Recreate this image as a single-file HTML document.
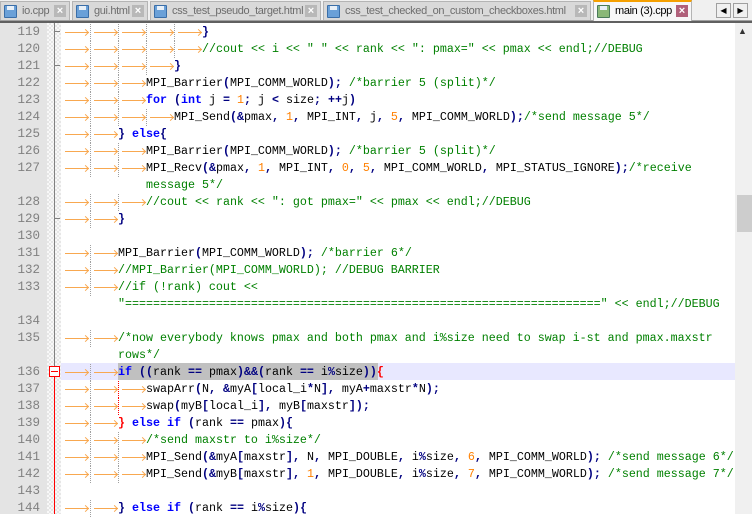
<!DOCTYPE html>
<html><head><meta charset="utf-8"><style>
*{margin:0;padding:0;box-sizing:border-box}
body{width:752px;height:514px;overflow:hidden;background:#fff;position:relative;font-family:"Liberation Sans",sans-serif}
.tabbar{position:absolute;left:0;top:0;width:752px;height:21px;background:#f0f0f0;border-bottom:1px solid #a0a0a0}
.tab{position:absolute;top:1px;height:19px;background:#d9d9d9;border:1px solid #b4b4b4;border-bottom:none;font-size:11px;letter-spacing:-0.35px;color:#6d6d6d;line-height:18px;padding-left:21px;white-space:nowrap;overflow:hidden}
.tab.act{background:#f7f7f7;color:#000;border-top:2px solid #f5a000;top:0;height:21px;line-height:18px}
.ic{position:absolute;left:3px;top:3px;width:13px;height:13px;background:#6aa0d8;border:1px solid #3a6ea8;border-radius:1px}
.ic:after{content:"";position:absolute;left:2px;top:0;width:7px;height:4px;background:#e8f0f8}
.x{position:absolute;right:3px;top:3px;width:12px;height:12px;background:#b8b8b8;color:#fff;font-size:11px;line-height:12px;text-align:center;font-weight:bold;letter-spacing:0}
.act .x{background:#b0607a}
.arr{position:absolute;top:3px;width:15px;height:15px;border:1px solid #a0a0a0;background:#f0f0f0;font-size:8px;line-height:13px;text-align:center}
.sep{position:absolute;top:21px;left:0;width:752px;height:2px;background:#606060}
.ln{position:absolute;left:0;top:23px;width:47px;height:491px;background:#e4e4e4}
.fm{position:absolute;left:47px;top:23px;width:14px;height:491px;background-color:#f8f8f8;background-image:linear-gradient(45deg,#e6e6e6 25%,transparent 25%,transparent 75%,#e6e6e6 75%),linear-gradient(45deg,#e6e6e6 25%,transparent 25%,transparent 75%,#e6e6e6 75%);background-size:4px 4px;background-position:0 0,2px 2px}
.sb{position:absolute;left:735px;top:23px;width:17px;height:491px;background:#f0f0f0}
.thumb{position:absolute;left:737px;top:195px;width:15px;height:37px;background:#cdcdcd}
.row{position:absolute;left:0;height:17px;width:735px;font-family:"Liberation Mono",monospace;font-size:11.67px;line-height:17px;white-space:pre;color:#000}
.num{position:absolute;left:0;top:1px;width:40px;text-align:right;color:#808080;font-family:"Liberation Mono",monospace;font-size:12.5px}
.code{position:absolute;left:62px;top:1px}
.t{display:inline-block;width:28px;height:17px;position:relative;vertical-align:top}
.t:before{content:"";position:absolute;left:3px;top:8px;width:24px;height:1px;background:#f8a850}
.t:after{content:"";position:absolute;left:21px;top:6px;width:4px;height:4px;border-right:1px solid #f8a850;border-top:1px solid #f8a850;transform:rotate(45deg)}
.g{border-left:1px dotted #a0a0a0}
.k{color:#0000ff;font-weight:bold}
.o{color:#000080;font-weight:bold}
.n{color:#ff8000}
.c{color:#008000}
.s{color:#808080}
.r{color:#ff0000;font-weight:bold}
</style></head><body>
<div class="tabbar">
<div class="tab" style="left:0;width:70px"><span class="ic"></span>io.cpp<span class="x">×</span></div>
<div class="tab" style="left:72px;width:76px"><span class="ic"></span>gui.html<span class="x">×</span></div>
<div class="tab" style="left:150px;width:171px"><span class="ic"></span>css_test_pseudo_target.html<span class="x">×</span></div>
<div class="tab" style="left:323px;width:268px"><span class="ic"></span>css_test_checked_on_custom_checkboxes.html<span class="x">×</span></div>
<div class="tab act" style="left:593px;width:99px"><span class="ic" style="background:#8ab878;border-color:#4a7a5a"></span>main (3).cpp<span class="x">×</span></div>
<div class="arr" style="left:716px">◀</div><div class="arr" style="left:733px">▶</div>
</div>
<div class="sep"></div>
<div class="ln"></div><div class="fm"></div>
<div style="position:absolute;left:54px;top:23px;width:1px;height:343px;background:#808080"></div>
<div style="position:absolute;left:54px;top:31px;width:6px;height:1px;background:#808080"></div>
<div style="position:absolute;left:54px;top:65px;width:6px;height:1px;background:#808080"></div>
<div style="position:absolute;left:54px;top:218px;width:6px;height:1px;background:#808080"></div>
<div style="position:absolute;left:49px;top:366px;width:11px;height:11px;border:1px solid #f00;background:#fff"></div>
<div style="position:absolute;left:51px;top:371px;width:7px;height:1px;background:#f00"></div>
<div style="position:absolute;left:54px;top:377px;width:1px;height:137px;background:#f00"></div>
<div style="position:absolute;left:61px;top:363px;width:674px;height:17px;background:#e8e8ff"></div>
<div style="position:absolute;left:118px;top:363px;width:260px;height:17px;background:#c0c0c0"></div>
<div class="sb"></div><div class="thumb"></div>
<div style="position:absolute;left:738px;top:26px;font-size:9px;color:#333">▲</div>

<div class="row" style="top:23px"><span class="num">119</span><span class="code"><span class="t"></span><span class="t g"></span><span class="t g"></span><span class="t g"></span><span class="t g"></span><span class="o">}</span></span></div>
<div class="row" style="top:40px"><span class="num">120</span><span class="code"><span class="t"></span><span class="t g"></span><span class="t g"></span><span class="t g"></span><span class="t g"></span><span class="c">//cout &lt;&lt; i &lt;&lt; " " &lt;&lt; rank &lt;&lt; ": pmax=" &lt;&lt; pmax &lt;&lt; endl;//DEBUG</span></span></div>
<div class="row" style="top:57px"><span class="num">121</span><span class="code"><span class="t"></span><span class="t g"></span><span class="t g"></span><span class="t g"></span><span class="o">}</span></span></div>
<div class="row" style="top:74px"><span class="num">122</span><span class="code"><span class="t"></span><span class="t g"></span><span class="t g"></span>MPI_Barrier<span class="o">(</span>MPI_COMM_WORLD<span class="o">);</span> <span class="c">/*barrier 5 (split)*/</span></span></div>
<div class="row" style="top:91px"><span class="num">123</span><span class="code"><span class="t"></span><span class="t g"></span><span class="t g"></span><span class="k">for</span> <span class="o">(</span><span class="k">int</span> j <span class="o">=</span> <span class="n">1</span><span class="o">;</span> j <span class="o">&lt;</span> size<span class="o">;</span> <span class="o">++</span>j<span class="o">)</span></span></div>
<div class="row" style="top:108px"><span class="num">124</span><span class="code"><span class="t"></span><span class="t g"></span><span class="t g"></span><span class="t g"></span>MPI_Send<span class="o">(&amp;</span>pmax<span class="o">,</span> <span class="n">1</span><span class="o">,</span> MPI_INT<span class="o">,</span> j<span class="o">,</span> <span class="n">5</span><span class="o">,</span> MPI_COMM_WORLD<span class="o">);</span><span class="c">/*send message 5*/</span></span></div>
<div class="row" style="top:125px"><span class="num">125</span><span class="code"><span class="t"></span><span class="t g"></span><span class="o">}</span> <span class="k">else</span><span class="o">{</span></span></div>
<div class="row" style="top:142px"><span class="num">126</span><span class="code"><span class="t"></span><span class="t g"></span><span class="t g"></span>MPI_Barrier<span class="o">(</span>MPI_COMM_WORLD<span class="o">);</span> <span class="c">/*barrier 5 (split)*/</span></span></div>
<div class="row" style="top:159px"><span class="num">127</span><span class="code"><span class="t"></span><span class="t g"></span><span class="t g"></span>MPI_Recv<span class="o">(&amp;</span>pmax<span class="o">,</span> <span class="n">1</span><span class="o">,</span> MPI_INT<span class="o">,</span> <span class="n">0</span><span class="o">,</span> <span class="n">5</span><span class="o">,</span> MPI_COMM_WORLD<span class="o">,</span> MPI_STATUS_IGNORE<span class="o">);</span><span class="c">/*receive</span></span></div>
<div class="row" style="top:176px"><span class="code" style="left:146px"><span class="c">message 5*/</span></span></div>
<div class="row" style="top:193px"><span class="num">128</span><span class="code"><span class="t"></span><span class="t g"></span><span class="t g"></span><span class="c">//cout &lt;&lt; rank &lt;&lt; ": got pmax=" &lt;&lt; pmax &lt;&lt; endl;//DEBUG</span></span></div>
<div class="row" style="top:210px"><span class="num">129</span><span class="code"><span class="t"></span><span class="t g"></span><span class="o">}</span></span></div>
<div class="row" style="top:227px"><span class="num">130</span></div>
<div class="row" style="top:244px"><span class="num">131</span><span class="code"><span class="t"></span><span class="t g"></span>MPI_Barrier<span class="o">(</span>MPI_COMM_WORLD<span class="o">);</span> <span class="c">/*barrier 6*/</span></span></div>
<div class="row" style="top:261px"><span class="num">132</span><span class="code"><span class="t"></span><span class="t g"></span><span class="c">//MPI_Barrier(MPI_COMM_WORLD); //DEBUG BARRIER</span></span></div>
<div class="row" style="top:278px"><span class="num">133</span><span class="code"><span class="t"></span><span class="t g"></span><span class="c">//if (!rank) cout &lt;&lt;</span></span></div>
<div class="row" style="top:295px"><span class="code" style="left:118px"><span class="c">"====================================================================" &lt;&lt; endl;//DEBUG</span></span></div>
<div class="row" style="top:312px"><span class="num">134</span></div>
<div class="row" style="top:329px"><span class="num">135</span><span class="code"><span class="t"></span><span class="t g"></span><span class="c">/*now everybody knows pmax and both pmax and i%size need to swap i-st and pmax.maxstr</span></span></div>
<div class="row" style="top:346px"><span class="code" style="left:118px"><span class="c">rows*/</span></span></div>
<div class="row" style="top:363px"><span class="num">136</span><span class="code"><span class="t"></span><span class="t g"></span><span class="k">if</span> <span class="o">((</span>rank <span class="o">==</span> pmax<span class="o">)&amp;&amp;(</span>rank <span class="o">==</span> i<span class="o">%</span>size<span class="o">))</span><span class="r">{</span></span></div>
<div class="row" style="top:380px"><span class="num">137</span><span class="code"><span class="t"></span><span class="t g"></span><span class="t" style="border-left:1px dotted #f00"></span>swapArr<span class="o">(</span>N<span class="o">,</span> <span class="o">&amp;</span>myA<span class="o">[</span>local_i<span class="o">*</span>N<span class="o">],</span> myA<span class="o">+</span>maxstr<span class="o">*</span>N<span class="o">);</span></span></div>
<div class="row" style="top:397px"><span class="num">138</span><span class="code"><span class="t"></span><span class="t g"></span><span class="t" style="border-left:1px dotted #f00"></span>swap<span class="o">(</span>myB<span class="o">[</span>local_i<span class="o">],</span> myB<span class="o">[</span>maxstr<span class="o">]);</span></span></div>
<div class="row" style="top:414px"><span class="num">139</span><span class="code"><span class="t"></span><span class="t g"></span><span class="r">}</span> <span class="k">else</span> <span class="k">if</span> <span class="o">(</span>rank <span class="o">==</span> pmax<span class="o">){</span></span></div>
<div class="row" style="top:431px"><span class="num">140</span><span class="code"><span class="t"></span><span class="t g"></span><span class="t g"></span><span class="c">/*send maxstr to i%size*/</span></span></div>
<div class="row" style="top:448px"><span class="num">141</span><span class="code"><span class="t"></span><span class="t g"></span><span class="t g"></span>MPI_Send<span class="o">(&amp;</span>myA<span class="o">[</span>maxstr<span class="o">],</span> N<span class="o">,</span> MPI_DOUBLE<span class="o">,</span> i<span class="o">%</span>size<span class="o">,</span> <span class="n">6</span><span class="o">,</span> MPI_COMM_WORLD<span class="o">);</span> <span class="c">/*send message 6*/</span></span></div>
<div class="row" style="top:465px"><span class="num">142</span><span class="code"><span class="t"></span><span class="t g"></span><span class="t g"></span>MPI_Send<span class="o">(&amp;</span>myB<span class="o">[</span>maxstr<span class="o">],</span> <span class="n">1</span><span class="o">,</span> MPI_DOUBLE<span class="o">,</span> i<span class="o">%</span>size<span class="o">,</span> <span class="n">7</span><span class="o">,</span> MPI_COMM_WORLD<span class="o">);</span> <span class="c">/*send message 7*/</span></span></div>
<div class="row" style="top:482px"><span class="num">143</span></div>
<div class="row" style="top:499px"><span class="num">144</span><span class="code"><span class="t"></span><span class="t g"></span><span class="o">}</span> <span class="k">else</span> <span class="k">if</span> <span class="o">(</span>rank <span class="o">==</span> i<span class="o">%</span>size<span class="o">){</span></span></div>
</body></html>
